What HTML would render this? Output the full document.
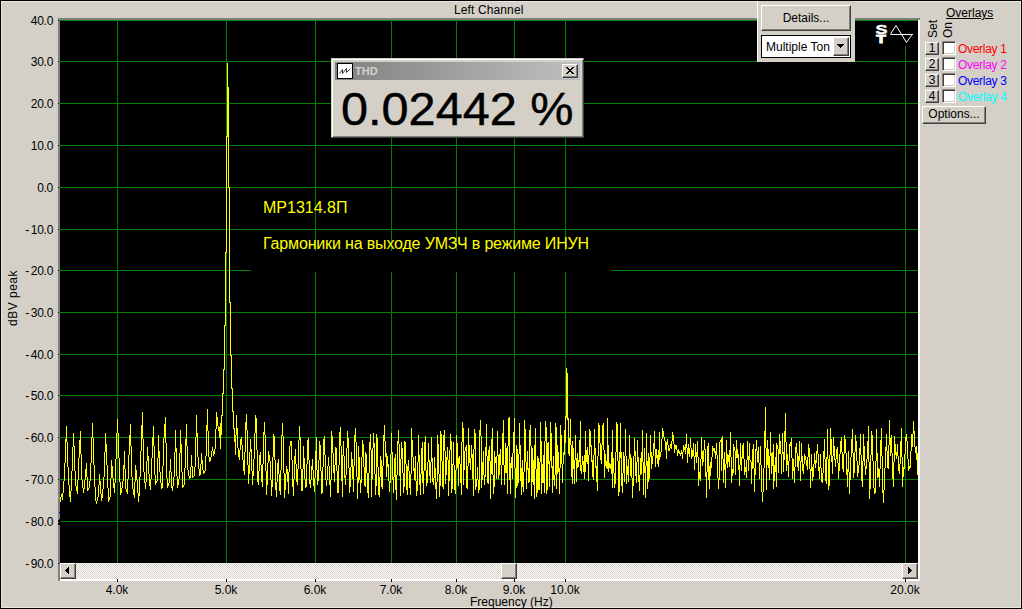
<!DOCTYPE html>
<html><head><meta charset="utf-8"><title>Spectrum - Left Channel</title>
<style>
*{box-sizing:border-box;margin:0;padding:0}
html,body{width:1022px;height:609px;overflow:hidden;background:#d4d0c8}
body{position:relative;font-family:"Liberation Sans",sans-serif;font-size:12px;color:#000;line-height:1}
.a{position:absolute}
.t{position:absolute;white-space:nowrap;line-height:14px;height:14px}
.yl{position:absolute;left:9px;width:44px;text-align:right;line-height:14px;height:14px;font-size:12px;letter-spacing:-.3px}
.xl{position:absolute;top:583px;width:60px;text-align:center;line-height:14px;height:14px;font-size:12px}
.btn{position:absolute;background:#d4d0c8;border:1px solid;border-color:#fff #404040 #404040 #fff;box-shadow:inset -1px -1px 0 #808080, inset 1px 1px 0 #d4d0c8;text-align:center;white-space:nowrap}
.sunk{position:absolute;background:#fff;border:1px solid;border-color:#808080 #fff #fff #808080;box-shadow:inset 1px 1px 0 #404040, inset -1px -1px 0 #d4d0c8}
</style></head><body>

<div class="a" style="left:0;top:0;width:1022px;height:1px;background:#000"></div>
<div class="a" style="left:0;top:0;width:1px;height:609px;background:#000"></div>
<div class="a" style="left:1021px;top:0;width:1px;height:609px;background:#000"></div>
<div class="a" style="left:0;top:608px;width:1022px;height:1px;background:#000"></div>
<div class="a" style="left:1px;top:1px;width:1020px;height:607px;border:1px solid #e8e6e0"></div>
<div class="a" style="left:58px;top:18px;width:862px;height:563px;background:#808080"></div>
<div class="a" style="left:60px;top:20px;width:860px;height:561px;background:#fff"></div>
<svg class="a" style="left:60px;top:563px" width="858" height="16" shape-rendering="crispEdges"><defs><pattern id="ck" width="2" height="2" patternUnits="userSpaceOnUse"><rect width="2" height="2" fill="#d4d0c8"/><rect width="1" height="1" fill="#fff"/><rect x="1" y="1" width="1" height="1" fill="#fff"/></pattern></defs><rect width="858" height="16" fill="url(#ck)"/></svg>
<svg class="a" style="left:0;top:0" width="1022" height="609" viewBox="0 0 1022 609" shape-rendering="crispEdges">
<rect x="60" y="20" width="858" height="543" fill="#000"/>
<path d="M60 20.5H918M60 61.5H918M60 103.5H918M60 145.5H918M60 187.5H918M60 229.5H918M60 270.5H918M60 312.5H918M60 354.5H918M60 395.5H918M60 437.5H918M60 479.5H918M60 521.5H918M117.5 20V563M226.5 20V563M315.5 20V563M391.5 20V563M456.5 20V563M514.5 20V563M565.5 20V563M905.5 20V563" stroke="#008000" stroke-width="1" fill="none"/>
<rect x="251" y="251" width="360" height="21" fill="#000"/>
<rect x="872" y="22" width="45" height="24" fill="#000"/>
<path d="M60.5 497V502M61.5 494V497M62.5 493V500M63.5 481V493M64.5 463V481M65.5 439V463M66.5 426V442M67.5 442V467M68.5 467V485M69.5 485V497M70.5 491V502M71.5 471V491M72.5 447V471M73.5 433V447M74.5 446V471M75.5 471V486M76.5 486V491M77.5 480V494M78.5 458V480M79.5 440V458M80.5 431V454M81.5 454V480M82.5 480V488M83.5 488V493M84.5 480V489M85.5 469V480M86.5 463V477M87.5 477V491M88.5 488V490M89.5 481V488M90.5 463V481M91.5 437V463M92.5 423V438M93.5 438V465M94.5 465V487M95.5 487V501M96.5 501V504M97.5 497V501M98.5 485V497M99.5 474V485M100.5 481V494M101.5 494V501M102.5 489V498M103.5 477V489M104.5 452V477M105.5 433V452M106.5 444V465M107.5 465V488M108.5 488V502M109.5 497V500M110.5 478V497M111.5 460V478M112.5 466V478M113.5 478V488M114.5 483V493M115.5 459V483M116.5 433V459M117.5 419V433M118.5 433V458M119.5 458V482M120.5 482V495M121.5 488V493M122.5 481V488M123.5 465V481M124.5 451V469M125.5 469V489M126.5 489V492M127.5 479V494M128.5 455V479M129.5 435V455M130.5 424V446M131.5 446V477M132.5 477V489M133.5 489V495M134.5 482V498M135.5 465V482M136.5 470V480M137.5 480V493M138.5 493V502M139.5 477V496M140.5 451V477M141.5 425V451M142.5 412V439M143.5 439V472M144.5 472V483M145.5 482V489M146.5 461V482M147.5 447V461M148.5 456V474M149.5 474V486M150.5 479V490M151.5 458V479M152.5 437V458M153.5 426V446M154.5 446V475M155.5 475V485M156.5 481V483M157.5 458V481M158.5 435V458M159.5 451V472M160.5 472V483M161.5 483V489M162.5 466V488M163.5 438V466M164.5 424V438M165.5 417V443M166.5 443V478M167.5 478V488M168.5 483V486M169.5 471V483M170.5 459V472M171.5 472V488M172.5 486V491M173.5 477V486M174.5 452V477M175.5 430V452M176.5 448V476M177.5 476V488M178.5 479V485M179.5 453V479M180.5 430V453M181.5 444V472M182.5 472V488M183.5 485V487M184.5 468V485M185.5 439V468M186.5 424V446M187.5 446V470M188.5 470V476M189.5 476V479M190.5 467V478M191.5 455V467M192.5 466V478M193.5 476V477M194.5 467V476M195.5 437V467M196.5 415V437M197.5 433V457M198.5 457V469M199.5 469V476M200.5 464V475M201.5 453V464M202.5 460V470M203.5 470V474M204.5 471V473M205.5 456V471M206.5 425V456M207.5 409V431M208.5 431V457M209.5 457V462M210.5 457V461M211.5 451V457M212.5 447V451M213.5 451V456M214.5 449V454M215.5 429V449M216.5 412V429M217.5 417V426M218.5 426V431M219.5 427V438M220.5 423V449M221.5 415V435M222.5 393V416M223.5 369V394M224.5 325V370M225.5 252V326M226.5 136V253M227.5 63V137M228.5 87V188M229.5 187V303M230.5 302V356M231.5 355V389M232.5 388V412M233.5 411V429M234.5 428V442M235.5 435V455M236.5 415V435M237.5 428V448M238.5 448V457M239.5 450V460M240.5 439V450M241.5 437V445M242.5 445V460M243.5 460V471M244.5 452V475M245.5 422V452M246.5 414V430M247.5 430V465M248.5 465V484M249.5 452V474M250.5 439V452M251.5 449V471M252.5 471V485M253.5 459V476M254.5 433V459M255.5 415V433M256.5 418V450M257.5 450V482M258.5 471V485M259.5 455V471M260.5 452V465M261.5 465V482M262.5 464V487M263.5 432V464M264.5 422V435M265.5 435V471M266.5 471V495M267.5 463V485M268.5 451V463M269.5 455V461M270.5 461V480M271.5 480V496M272.5 457V487M273.5 434V457M274.5 436V460M275.5 460V490M276.5 482V497M277.5 463V482M278.5 459V474M279.5 474V491M280.5 470V495M281.5 435V470M282.5 423V436M283.5 436V473M284.5 473V498M285.5 474V490M286.5 466V474M287.5 469V482M288.5 472V494M289.5 446V472M290.5 441V446M291.5 441V460M292.5 460V487M293.5 479V496M294.5 456V479M295.5 449V464M296.5 464V482M297.5 469V485M298.5 440V469M299.5 426V440M300.5 437V469M301.5 469V491M302.5 469V491M303.5 446V469M304.5 458V479M305.5 479V488M306.5 464V487M307.5 440V464M308.5 438V460M309.5 460V484M310.5 480V488M311.5 466V480M312.5 459V470M313.5 470V486M314.5 478V492M315.5 451V478M316.5 437V470M317.5 470V485M318.5 460V481M319.5 441V460M320.5 445V471M321.5 471V494M322.5 467V493M323.5 439V467M324.5 436V455M325.5 455V480M326.5 480V486M327.5 466V480M328.5 457V466M329.5 466V485M330.5 480V497M331.5 431V480M332.5 436V453M333.5 453V473M334.5 465V482M335.5 447V465M336.5 448V471M337.5 471V493M338.5 465V493M339.5 432V465M340.5 427V446M341.5 446V481M342.5 455V497M343.5 441V456M344.5 456V478M345.5 475V485M346.5 448V475M347.5 431V448M348.5 438V468M349.5 468V493M350.5 467V487M351.5 452V467M352.5 459V479M353.5 466V492M354.5 435V466M355.5 428V442M356.5 442V477M357.5 477V499M358.5 446V483M359.5 457V480M360.5 480V493M361.5 457V483M362.5 440V457M363.5 444V467M364.5 467V486M365.5 452V487M366.5 454V473M367.5 473V493M368.5 473V498M369.5 442V473M370.5 434V450M371.5 450V497M372.5 448V479M373.5 433V448M374.5 443V474M375.5 474V495M376.5 434V486M377.5 438V467M378.5 467V495M379.5 477V497M380.5 456V477M381.5 460V487M382.5 466V489M383.5 435V466M384.5 425V441M385.5 441V457M386.5 453V477M387.5 456V467M388.5 464V481M389.5 481V492M390.5 454V483M391.5 433V454M392.5 452V480M393.5 477V493M394.5 458V477M395.5 454V490M396.5 475V500M397.5 441V475M398.5 430V444M399.5 444V476M400.5 459V496M401.5 442V459M402.5 448V473M403.5 473V493M404.5 441V487M405.5 442V464M406.5 464V490M407.5 466V495M408.5 460V471M409.5 471V488M410.5 474V495M411.5 428V474M412.5 440V457M413.5 457V471M414.5 468V480M415.5 456V481M416.5 481V496M417.5 462V491M418.5 435V462M419.5 455V485M420.5 474V495M421.5 448V474M422.5 442V483M423.5 471V494M424.5 442V471M425.5 436V470M426.5 470V486M427.5 462V483M428.5 443V462M429.5 460V476M430.5 462V483M431.5 437V462M432.5 458V482M433.5 478V485M434.5 457V478M435.5 468V489M436.5 482V499M437.5 435V482M438.5 444V474M439.5 474V497M440.5 431V486M441.5 434V461M442.5 461V487M443.5 435V489M444.5 430V451M445.5 451V484M446.5 457V475M447.5 447V460M448.5 460V496M449.5 450V481M450.5 434V450M451.5 441V493M452.5 464V489M453.5 442V465M454.5 465V490M455.5 470V494M456.5 435V470M457.5 443V468M458.5 458V486M459.5 456V464M460.5 464V483M461.5 442V495M462.5 422V442M463.5 428V485M464.5 451V470M465.5 447V451M466.5 445V488M467.5 466V489M468.5 428V466M469.5 445V463M470.5 458V470M471.5 445V458M472.5 454V479M473.5 449V496M474.5 429V449M475.5 433V490M476.5 479V487M477.5 467V480M478.5 480V493M479.5 430V490M480.5 420V436M481.5 436V488M482.5 462V480M483.5 451V475M484.5 475V485M485.5 447V477M486.5 424V456M487.5 456V483M488.5 450V484M489.5 446V461M490.5 461V499M491.5 439V474M492.5 428V475M493.5 475V494M494.5 451V487M495.5 457V463M496.5 456V479M497.5 431V456M498.5 455V479M499.5 454V475M500.5 449V465M501.5 465V485M502.5 433V465M503.5 420V465M504.5 465V485M505.5 443V473M506.5 448V473M507.5 446V494M508.5 418V446M509.5 417V480M510.5 463V494M511.5 457V468M512.5 453V479M513.5 432V453M514.5 418V468M515.5 468V498M516.5 445V488M517.5 449V486M518.5 454V483M519.5 423V454M520.5 445V481M521.5 468V495M522.5 460V487M523.5 472V492M524.5 420V472M525.5 429V462M526.5 462V489M527.5 451V470M528.5 468V483M529.5 430V482M530.5 425V446M531.5 446V496M532.5 448V482M533.5 460V485M534.5 445V499M535.5 428V469M536.5 469V497M537.5 456V493M538.5 458V490M539.5 462V490M540.5 422V462M541.5 441V494M542.5 464V483M543.5 455V483M544.5 441V493M545.5 421V441M546.5 427V494M547.5 443V490M548.5 442V464M549.5 461V487M550.5 422V461M551.5 433V468M552.5 466V493M553.5 456V480M554.5 475V486M555.5 423V475M556.5 427V489M557.5 445V474M558.5 452V472M559.5 468V494M560.5 425V468M561.5 435V464M562.5 464V483M563.5 452V464M564.5 430V455M565.5 416V443M566.5 368V418M567.5 373V420M568.5 418V454M569.5 438V456M570.5 419V445M571.5 445V477M572.5 441V484M573.5 448V469M574.5 460V484M575.5 435V460M576.5 458V482M577.5 453V468M578.5 460V467M579.5 440V462M580.5 421V471M581.5 465V474M582.5 456V465M583.5 461V472M584.5 455V479M585.5 431V472M586.5 450V462M587.5 447V464M588.5 455V481M589.5 429V455M590.5 431V447M591.5 445V462M592.5 460V477M593.5 455V480M594.5 429V455M595.5 448V468M596.5 466V482M597.5 456V491M598.5 423V456M599.5 425V443M600.5 443V460M601.5 445V464M602.5 425V445M603.5 423V450M604.5 450V478M605.5 454V466M606.5 461V468M607.5 418V469M608.5 445V472M609.5 463V468M610.5 464V469M611.5 452V474M612.5 430V488M613.5 458V473M614.5 473V488M615.5 452V484M616.5 422V452M617.5 424V461M618.5 461V496M619.5 452V492M620.5 423V458M621.5 452V486M622.5 473V493M623.5 452V473M624.5 456V482M625.5 429V456M626.5 456V484M627.5 466V475M628.5 459V482M629.5 435V459M630.5 454V476M631.5 458V478M632.5 478V498M633.5 456V486M634.5 438V456M635.5 451V476M636.5 462V483M637.5 440V462M638.5 457V482M639.5 475V491M640.5 458V475M641.5 452V474M642.5 430V462M643.5 462V495M644.5 448V473M645.5 466V498M646.5 433V466M647.5 461V489M648.5 453V482M649.5 457V479M650.5 435V457M651.5 452V469M652.5 456V464M653.5 443V456M654.5 431V449M655.5 449V467M656.5 449V458M657.5 455V464M658.5 450V467M659.5 432V460M660.5 452V457M661.5 439V452M662.5 428V439M663.5 431V437M664.5 437V441M665.5 441V450M666.5 442V459M667.5 439V445M668.5 445V451M669.5 448V451M670.5 444V448M671.5 441V449M672.5 432V441M673.5 435V444M674.5 444V453M675.5 445V449M676.5 445V450M677.5 450V456M678.5 449V453M679.5 451V454M680.5 453V456M681.5 450V454M682.5 452V459M683.5 445V452M684.5 447V450M685.5 444V454M686.5 434V448M687.5 448V463M688.5 444V454M689.5 448V457M690.5 438V448M691.5 448V459M692.5 450V457M693.5 443V456M694.5 456V470M695.5 444V457M696.5 452V463M697.5 441V457M698.5 457V486M699.5 472V479M700.5 459V481M701.5 437V459M702.5 451V466M703.5 450V462M704.5 440V450M705.5 449V477M706.5 472V498M707.5 446V472M708.5 443V480M709.5 466V489M710.5 462V476M711.5 457V468M712.5 446V457M713.5 448V451M714.5 448V453M715.5 451V459M716.5 443V455M717.5 455V478M718.5 478V489M719.5 442V480M720.5 440V442M721.5 438V471M722.5 436V459M723.5 459V483M724.5 452V470M725.5 464V488M726.5 440V464M727.5 454V468M728.5 455V462M729.5 450V467M730.5 432V457M731.5 457V483M732.5 469V476M733.5 444V473M734.5 447V451M735.5 451V475M736.5 440V458M737.5 449V458M738.5 454V470M739.5 465V486M740.5 443V465M741.5 457V471M742.5 445V458M743.5 443V459M744.5 459V475M745.5 467V472M746.5 460V478M747.5 441V460M748.5 456V471M749.5 443V460M750.5 460V462M751.5 462V484M752.5 449V469M753.5 444V468M754.5 468V492M755.5 449V475M756.5 440V451M757.5 451V462M758.5 447V463M759.5 463V479M760.5 446V465M761.5 465V492M762.5 492V502M763.5 468V492M764.5 431V468M765.5 407V448M766.5 448V490M767.5 440V465M768.5 449V468M769.5 456V480M770.5 432V456M771.5 453V474M772.5 452V466M773.5 444V489M774.5 465V481M775.5 457V472M776.5 443V487M777.5 445V449M778.5 449V473M779.5 434V454M780.5 441V454M781.5 454V474M782.5 433V454M783.5 452V472M784.5 431V460M785.5 413V442M786.5 442V471M787.5 454V465M788.5 461V477M789.5 444V461M790.5 442V446M791.5 438V458M792.5 458V479M793.5 459V471M794.5 467V483M795.5 447V467M796.5 443V453M797.5 453V467M798.5 456V471M799.5 441V461M800.5 461V481M801.5 443V462M802.5 456V471M803.5 464V474M804.5 454V464M805.5 456V460M806.5 460V466M807.5 457V470M808.5 444V457M809.5 448V469M810.5 469V488M811.5 454V471M812.5 467V481M813.5 464V477M814.5 453V464M815.5 460V468M816.5 451V463M817.5 444V454M818.5 454V471M819.5 467V479M820.5 454V468M821.5 468V482M822.5 473V483M823.5 451V473M824.5 439V459M825.5 459V481M826.5 457V484M827.5 429V459M828.5 459V490M829.5 455V486M830.5 428V455M831.5 439V462M832.5 456V474M833.5 437V456M834.5 446V460M835.5 459V467M836.5 449V459M837.5 447V463M838.5 463V479M839.5 454V471M840.5 441V454M841.5 437V452M842.5 452V469M843.5 454V472M844.5 435V454M845.5 439V453M846.5 453V475M847.5 469V487M848.5 451V472M849.5 472V494M850.5 457V480M851.5 439V457M852.5 429V453M853.5 453V478M854.5 452V473M855.5 435V452M856.5 441V461M857.5 461V477M858.5 465V473M859.5 448V465M860.5 434V455M861.5 455V481M862.5 461V487M863.5 434V461M864.5 446V466M865.5 466V475M866.5 459V469M867.5 441V459M868.5 426V462M869.5 462V499M870.5 455V489M871.5 431V455M872.5 435V461M873.5 461V488M874.5 488V494M875.5 461V493M876.5 429V461M877.5 453V478M878.5 468V477M879.5 469V487M880.5 440V469M881.5 428V456M882.5 456V493M883.5 490V503M884.5 468V490M885.5 447V468M886.5 434V451M887.5 451V468M888.5 445V469M889.5 420V445M890.5 438V456M891.5 435V453M892.5 453V479M893.5 462V487M894.5 436V462M895.5 444V455M896.5 452V459M897.5 444V456M898.5 456V471M899.5 464V474M900.5 441V464M901.5 428V457M902.5 457V487M903.5 467V477M904.5 454V469M905.5 437V454M906.5 434V441M907.5 441V459M908.5 459V471M909.5 466V469M910.5 451V468M911.5 434V451M912.5 434V447M913.5 421V434M914.5 431V447M915.5 447V453M916.5 446V460M917.5 453V475" stroke="#ffff00" stroke-width="1" fill="none"/>
<path d="M58 20.5H59M58 61.5H59M58 103.5H59M58 145.5H59M58 187.5H59M58 229.5H59M58 270.5H59M58 312.5H59M58 354.5H59M58 395.5H59M58 437.5H59M58 479.5H59M58 521.5H59M58 563.5H59M117.5 579V582M226.5 579V582M315.5 579V582M391.5 579V582M456.5 579V582M514.5 579V582M565.5 579V582M905.5 579V582" stroke="#000" stroke-width="1" fill="none"/>
<rect x="59" y="512" width="1" height="1" fill="#0000ff"/><path d="M60.5 519L58.5 521L60.5 522L58.5 524L60.5 525" stroke="#000" stroke-width="1" fill="none"/>
</svg>
<div class="yl" style="top:14px">40.0</div>
<div class="yl" style="top:55px">30.0</div>
<div class="yl" style="top:97px">20.0</div>
<div class="yl" style="top:139px">10.0</div>
<div class="yl" style="top:181px">0.0</div>
<div class="yl" style="top:223px"><span style="letter-spacing:1.6px">-</span>10.0</div>
<div class="yl" style="top:264px"><span style="letter-spacing:1.6px">-</span>20.0</div>
<div class="yl" style="top:306px"><span style="letter-spacing:1.6px">-</span>30.0</div>
<div class="yl" style="top:348px"><span style="letter-spacing:1.6px">-</span>40.0</div>
<div class="yl" style="top:389px"><span style="letter-spacing:1.6px">-</span>50.0</div>
<div class="yl" style="top:431px"><span style="letter-spacing:1.6px">-</span>60.0</div>
<div class="yl" style="top:473px"><span style="letter-spacing:1.6px">-</span>70.0</div>
<div class="yl" style="top:515px"><span style="letter-spacing:1.6px">-</span>80.0</div>
<div class="yl" style="top:557px"><span style="letter-spacing:1.6px">-</span>90.0</div>
<div class="xl" style="left:87px">4.0k</div>
<div class="xl" style="left:196px">5.0k</div>
<div class="xl" style="left:285px">6.0k</div>
<div class="xl" style="left:361px">7.0k</div>
<div class="xl" style="left:426px">8.0k</div>
<div class="xl" style="left:484px">9.0k</div>
<div class="xl" style="left:535px">10.0k</div>
<div class="xl" style="left:875px">20.0k</div>
<div class="t" style="left:454px;top:3px;letter-spacing:.12px">Left Channel</div>
<div class="t" style="left:470px;top:595px">Frequency (Hz)</div>
<div class="t" style="left:-22px;top:291px;width:70px;text-align:center;letter-spacing:.5px;transform:rotate(-90deg);transform-origin:50% 50%">dBV peak</div>
<div class="t" style="left:263px;top:199px;font-size:16px;line-height:18px;height:18px;color:#ffff00">МР1314.8П</div>
<div class="t" style="left:263px;top:235px;font-size:16px;line-height:18px;height:18px;color:#ffff00;letter-spacing:-.16px">Гармоники на выходе УМЗЧ в режиме ИНУН</div>
<div class="a" style="left:331px;top:58px;width:253px;height:80px;background:#d4d0c8;border:1px solid;border-color:#d4d0c8 #404040 #404040 #d4d0c8;box-shadow:inset 1px 1px 0 #fff, inset -1px -1px 0 #808080">
<div class="a" style="left:3px;top:3px;width:245px;height:18px;background:linear-gradient(to right,#808080,#c0c0c0)"></div>
<svg class="a" style="left:5px;top:4px" width="16" height="16" viewBox="0 0 16 16" shape-rendering="crispEdges"><rect x="0.5" y="0.5" width="15" height="15" fill="#fff" stroke="#000"/><path d="M2.5 10.5L5.5 6.5V10.5L9.5 5.5V9.5L13.5 5.5" stroke="#000" stroke-width="0.8" fill="none" shape-rendering="auto"/></svg>
<div class="t" style="left:23px;top:5px;font-size:11px;font-weight:bold;color:#d4d0c8;line-height:14px">THD</div>
<div class="btn" style="left:230px;top:5px;width:16px;height:14px"><svg class="a" style="left:3px;top:2px" width="8" height="7" viewBox="0 0 8 7" shape-rendering="crispEdges"><path d="M0 0h2v1h-2zM6 0h2v1h-2zM1 1h2v1h-2zM5 1h2v1h-2zM2 2h4v1h-4zM3 3h2v1h-2zM2 4h4v1h-4zM1 5h2v1h-2zM5 5h2v1h-2zM0 6h2v1h-2zM6 6h2v1h-2z" fill="#000"/></svg></div>
<div class="t" style="left:9px;top:25px;font-size:46px;line-height:50px;height:50px;transform:scaleX(1.057);transform-origin:0 0;-webkit-text-stroke:0.45px #000">0.02442 %</div>
</div>
<div class="a" style="left:757px;top:1px;width:98px;height:61px;background:#d4d0c8;border-left:1px solid #fff">
<div class="btn" style="left:3px;top:4px;width:90px;height:26px;line-height:24px">Details...</div>
<div class="a" style="left:3px;top:34px;width:90px;height:23px;background:#fff;border:1px solid #000"></div>
<div class="t" style="left:8px;top:39px">Multiple Ton</div>
<div class="btn" style="left:75px;top:36px;width:16px;height:19px"><svg class="a" style="left:3px;top:6px" width="7" height="4" viewBox="0 0 7 4" shape-rendering="crispEdges"><path d="M0 0h7v1h-1v1h-1v1h-1v1h-1v-1h-1v-1h-1v-1h-1z" fill="#000"/></svg></div>
</div>
<svg class="a" style="left:872px;top:22px" width="45" height="24" viewBox="872 22 45 24">
<text x="0" y="0" transform="translate(875.6 34) scale(1.42 1)" font-family="Liberation Sans,sans-serif" font-weight="bold" font-size="12.5" fill="#fff" stroke="#fff" stroke-width="0.5">S</text>
<text x="0" y="0" transform="translate(876.3 43) scale(1.42 1)" font-family="Liberation Sans,sans-serif" font-weight="bold" font-size="11" fill="#fff" stroke="#fff" stroke-width="0.9">T</text>
<path d="M890.5 34.5H913M890.5 34L896 25.5L906.5 42.5L912.5 34" stroke="#fff" stroke-width="1" fill="none"/>
</svg>
<div class="t" style="left:946px;top:6px;text-decoration:underline">Overlays</div>
<div class="t" style="left:926px;top:38px;transform:rotate(-90deg);transform-origin:0 0">Set</div>
<div class="t" style="left:941px;top:38px;transform:rotate(-90deg);transform-origin:0 0">On</div>
<div class="btn" style="left:925px;top:42px;width:14px;height:13px;line-height:10px;font-size:12px">1</div>
<div class="sunk" style="left:942px;top:41px;width:14px;height:14px"></div>
<div class="t" style="left:958px;top:42px;color:#ff0000;letter-spacing:-.3px">Overlay 1</div>
<div class="btn" style="left:925px;top:58px;width:14px;height:13px;line-height:10px;font-size:12px">2</div>
<div class="sunk" style="left:942px;top:57px;width:14px;height:14px"></div>
<div class="t" style="left:958px;top:58px;color:#ff00ff;letter-spacing:-.3px">Overlay 2</div>
<div class="btn" style="left:925px;top:74px;width:14px;height:13px;line-height:10px;font-size:12px">3</div>
<div class="sunk" style="left:942px;top:73px;width:14px;height:14px"></div>
<div class="t" style="left:958px;top:74px;color:#0000ff;letter-spacing:-.3px">Overlay 3</div>
<div class="btn" style="left:925px;top:90px;width:14px;height:13px;line-height:10px;font-size:12px">4</div>
<div class="sunk" style="left:942px;top:89px;width:14px;height:14px"></div>
<div class="t" style="left:958px;top:90px;color:#00ffff;letter-spacing:-.3px">Overlay 4</div>
<div class="btn" style="left:922px;top:106px;width:64px;height:18px;line-height:14px">Options...</div>
<div class="btn" style="left:60px;top:563px;width:16px;height:16px"><svg class="a" style="left:4px;top:3px" width="4" height="7" viewBox="0 0 4 7" shape-rendering="crispEdges"><path d="M4 0v7h-1v-1h-1v-1h-1v-1h-1v-1h1v-1h1v-1h1v-1z" fill="#000"/></svg></div>
<div class="btn" style="left:902px;top:563px;width:16px;height:16px"><svg class="a" style="left:5px;top:3px" width="4" height="7" viewBox="0 0 4 7" shape-rendering="crispEdges"><path d="M0 0v7h1v-1h1v-1h1v-1h1v-1h-1v-1h-1v-1h-1v-1z" fill="#000"/></svg></div>
<div class="btn" style="left:501px;top:563px;width:16px;height:16px"></div>
</body></html>
